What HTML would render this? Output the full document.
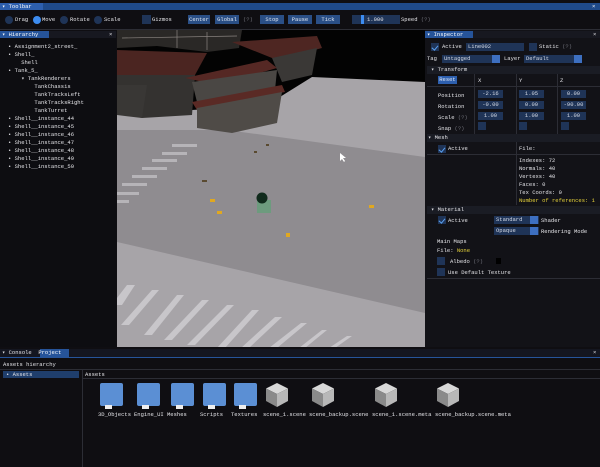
<!DOCTYPE html>
<html><head><meta charset="utf-8"><style>
*{margin:0;padding:0;box-sizing:border-box}
body{width:600px;height:467px;background:#0f0e12;position:relative;overflow:hidden;font-family:"Liberation Mono",monospace;font-size:5.5px;color:#e4e4e8;line-height:7px}
.a{position:absolute;white-space:nowrap}
.btn{position:absolute;background:#2a4f86;color:#dfe6f2;text-align:center;line-height:9px;height:9px}
.inp{position:absolute;background:#1f3457;color:#d6dbe6;text-align:center;line-height:8px;height:8px}
.cb{position:absolute;width:8px;height:8px;background:#1f3457}
.ck::after{content:"";position:absolute;left:2px;top:0.5px;width:2.5px;height:5px;border:solid #5aa0f0;border-width:0 1.3px 1.3px 0;transform:rotate(40deg)}
.rad{position:absolute;width:8px;height:8px;border-radius:50%;background:#1f3457}
.hdr{position:absolute;left:427px;width:173px;height:8px;background:#1a1c24}
.ln{position:absolute;background:#2c2d35}
.dim{color:#6e6f78}
.fold{position:absolute;top:383px;width:23px;height:23px;background:#5b8fd4;border-radius:2px}
.fold::after{content:"";position:absolute;left:5px;bottom:-3px;width:7px;height:4px;background:#eee}
.lb{position:absolute;top:411px;white-space:nowrap}
</style></head><body>
<div class="a" style="left:0;top:3px;width:600px;height:7px;background:#1f4a8a"></div>
<div class="a" style="left:0;top:3px;width:43px;height:7px;background:#2d5fae"></div>
<div class="a" style="left:2px;top:3px;color:#fff">▾ Toolbar</div>
<div class="a" style="left:592px;top:3px;color:#fff">×</div>
<div class="rad" style="left:5px;top:16px"></div><div class="a" style="left:15px;top:16px">Drag</div>
<div class="rad" style="left:33px;top:16px;background:#3d8cf0"></div><div class="a" style="left:42px;top:16px">Move</div>
<div class="rad" style="left:60px;top:16px"></div><div class="a" style="left:70px;top:16px">Rotate</div>
<div class="rad" style="left:94px;top:16px"></div><div class="a" style="left:104px;top:16px">Scale</div>
<div class="cb" style="left:142px;top:15px;width:9px;height:9px"></div><div class="a" style="left:152px;top:16px">Gizmos</div>
<div class="btn" style="left:188px;top:15px;width:22px">Center</div>
<div class="btn" style="left:215px;top:15px;width:24px">Global</div>
<div class="a dim" style="left:243px;top:16px">(?)</div>
<div class="btn" style="left:260px;top:15px;width:24px">Stop</div>
<div class="btn" style="left:288px;top:15px;width:24px">Pause</div>
<div class="btn" style="left:316px;top:15px;width:24px">Tick</div>
<div class="inp" style="left:352px;top:15px;width:48px;height:9px"></div>
<div class="a" style="left:361px;top:15px;width:3px;height:9px;background:#3d8cf0"></div>
<div class="a" style="left:367px;top:16px">1.000</div>
<div class="a" style="left:401px;top:16px">Speed <span class="dim">(?)</span></div>
<div class="ln" style="left:0;top:29px;width:600px;height:1px"></div>

<div class="a" style="left:0;top:31px;width:116px;height:7px;background:#171820"></div>
<div class="a" style="left:0;top:31px;width:49px;height:7px;background:#26549a"></div>
<div class="a" style="left:2px;top:31px;color:#fff">▾ Hierarchy</div>
<div class="a" style="left:109px;top:31px">×</div>
<div class="a" style="left:0;top:38px;width:116px;height:309px;background:#0d0d11"></div>
<div class="a" style="left:8px;top:43px;line-height:8px">• Assignment2_street_<br>• Shell_<br>&nbsp;&nbsp;&nbsp;&nbsp;Shell<br>• Tank_5_<br>&nbsp;&nbsp;&nbsp;&nbsp;▾ TankRenderers<br>&nbsp;&nbsp;&nbsp;&nbsp;&nbsp;&nbsp;&nbsp;&nbsp;TankChassis<br>&nbsp;&nbsp;&nbsp;&nbsp;&nbsp;&nbsp;&nbsp;&nbsp;TankTracksLeft<br>&nbsp;&nbsp;&nbsp;&nbsp;&nbsp;&nbsp;&nbsp;&nbsp;TankTracksRight<br>&nbsp;&nbsp;&nbsp;&nbsp;&nbsp;&nbsp;&nbsp;&nbsp;TankTurret<br>• Shell__instance_44<br>• Shell__instance_45<br>• Shell__instance_46<br>• Shell__instance_47<br>• Shell__instance_48<br>• Shell__instance_49<br>• Shell__instance_50</div>

<svg class="a" style="left:117px;top:30px" width="308" height="318" viewBox="0 0 308 318">
<rect width="308" height="318" fill="#030303"/>
<polygon points="0,85 150,75 195,47 308,52 308,318 0,318" fill="#a7a4a8"/>
<polygon points="0,100 110,100 308,127 308,283 0,212" fill="#8f8c90"/>
<polygon points="0,0 125,0 122,18 90,22 40,16 0,18" fill="#2a2826"/>
<g stroke="#8a8480" stroke-width="0.7"><line x1="5" y1="8" x2="120" y2="6"/><line x1="60" y1="0" x2="60" y2="18"/><line x1="90" y1="2" x2="90" y2="20"/></g>
<polygon points="0,20 90,23 78,45 0,45" fill="#4b2521"/>
<polygon points="0,45 78,45 75,85 25,88 0,82" fill="#343230"/>
<polygon points="115,12 200,6 205,18 160,30" fill="#4e2622"/>
<polygon points="155,28 200,18 195,45 165,52" fill="#3a3836"/>
<polygon points="68,48 150,30 160,38 100,55" fill="#552824"/>
<polygon points="75,52 160,40 158,60 80,72" fill="#4a4744"/>
<polygon points="75,72 165,55 168,62 80,80" fill="#5a2a25"/>
<polygon points="80,78 165,62 160,93 115,103 80,98" fill="#4f4b47"/>
<polygon points="0,55 30,55 25,88 0,85" fill="#393735"/>
<rect x="140" y="170" width="14" height="13" fill="#6d9b7e"/>
<circle cx="145" cy="168" r="5.5" fill="#102a1c"/>
<g fill="#e0a820"><rect x="93" y="169" width="5" height="3"/><rect x="100" y="181" width="5" height="3"/><rect x="252" y="175" width="5" height="3"/><rect x="169" y="203" width="4" height="4"/></g>
<g fill="#5a4a30"><rect x="85" y="150" width="5" height="2"/><rect x="137" y="121" width="3" height="2"/><rect x="149" y="114" width="3" height="2"/></g>
<g fill="#c8c6ca"><polygon points="10,255 18,255 5,275 0,275 0,268"/><polygon points="35,260 42,260 12,295 4,295"/><polygon points="60,265 67,265 35,305 27,305"/><polygon points="85,270 92,270 55,310 47,310"/><polygon points="110,275 117,275 78,315 70,315"/><polygon points="135,280 142,280 108,318 100,318"/><polygon points="158,287 165,287 132,318 124,318"/><polygon points="184,293 190,293 160,318 152,318"/><polygon points="205,300 210,300 188,318 182,318"/><polygon points="230,306 235,306 218,318 212,318"/></g>
<g fill="#b6b4b8"><rect x="0" y="170" width="12" height="3"/><rect x="0" y="162" width="22" height="3"/><rect x="5" y="153" width="25" height="3"/><rect x="15" y="145" width="25" height="3"/><rect x="25" y="137" width="25" height="3"/><rect x="35" y="129" width="25" height="3"/><rect x="45" y="122" width="25" height="3"/><rect x="55" y="114" width="25" height="3"/></g>
<polygon points="223,123 223,131 225,129 227,132 228,131 226,128 229,128" fill="#fff"/>
</svg>

<div class="a" style="left:425px;top:30px;width:175px;height:317px;background:#121217"></div>
<div class="a" style="left:425px;top:31px;width:175px;height:7px;background:#171820"></div>
<div class="a" style="left:425px;top:31px;width:48px;height:7px;background:#26549a"></div>
<div class="a" style="left:427px;top:31px;color:#fff">▾ Inspector</div>
<div class="a" style="left:593px;top:31px">×</div>
<div class="cb ck" style="left:431px;top:43px"></div><div class="a" style="left:442px;top:43px">Active</div>
<div class="inp" style="left:466px;top:43px;width:58px;text-align:left;padding-left:2px">Line002</div>
<div class="cb" style="left:529px;top:43px"></div><div class="a" style="left:539px;top:43px">Static <span class="dim">(?)</span></div>
<div class="a" style="left:427px;top:55px">Tag</div>
<div class="inp" style="left:442px;top:55px;width:58px;text-align:left;padding-left:2px">Untagged</div>
<div class="a" style="left:492px;top:55px;width:8px;height:8px;background:#3d6fc0"></div>
<div class="a" style="left:504px;top:55px">Layer</div>
<div class="inp" style="left:524px;top:55px;width:58px;text-align:left;padding-left:2px">Default</div>
<div class="a" style="left:574px;top:55px;width:8px;height:8px;background:#3d6fc0"></div>
<div class="hdr" style="top:66px"></div><div class="a" style="left:431px;top:66px">▾ Transform</div>
<div class="btn" style="left:438px;top:76px;width:19px;height:8px;line-height:8px;background:#2d5fae">Reset</div>
<div class="a" style="left:478px;top:77px">X</div><div class="a" style="left:519px;top:77px">Y</div><div class="a" style="left:560px;top:77px">Z</div>
<div class="ln" style="left:474px;top:74px;width:1px;height:60px"></div>
<div class="ln" style="left:516px;top:74px;width:1px;height:60px"></div>
<div class="ln" style="left:557px;top:74px;width:1px;height:60px"></div>
<div class="ln" style="left:427px;top:86px;width:173px;height:1px"></div>
<div class="a" style="left:438px;top:90px;line-height:11px">Position<br>Rotation<br>Scale <span class="dim">(?)</span><br>Snap <span class="dim">(?)</span></div>
<div class="inp" style="left:478px;top:90px;width:25px">-2.16</div><div class="inp" style="left:519px;top:90px;width:25px">1.05</div><div class="inp" style="left:561px;top:90px;width:25px">0.00</div>
<div class="inp" style="left:478px;top:101px;width:25px">-0.00</div><div class="inp" style="left:519px;top:101px;width:25px">0.00</div><div class="inp" style="left:561px;top:101px;width:25px">-90.00</div>
<div class="inp" style="left:478px;top:112px;width:25px">1.00</div><div class="inp" style="left:519px;top:112px;width:25px">1.00</div><div class="inp" style="left:561px;top:112px;width:25px">1.00</div>
<div class="cb" style="left:478px;top:122px"></div><div class="cb" style="left:519px;top:122px"></div><div class="cb" style="left:561px;top:122px"></div>
<div class="hdr" style="top:134px"></div><div class="a" style="left:428px;top:134px">▾ Mesh</div>
<div class="cb ck" style="left:438px;top:145px"></div><div class="a" style="left:448px;top:145px">Active</div>
<div class="ln" style="left:516px;top:142px;width:1px;height:63px"></div>
<div class="ln" style="left:427px;top:154px;width:173px;height:1px"></div>
<div class="a" style="left:519px;top:145px">File:</div>
<div class="a" style="left:519px;top:157px;line-height:8px">Indexes: 72<br>Normals: 40<br>Vertexs: 40<br>Faces: 0<br>Tex Coords: 0<br><span style="color:#e6d23a">Number of references: 1</span></div>
<div class="hdr" style="top:206px"></div><div class="a" style="left:431px;top:206px">▾ Material</div>
<div class="cb ck" style="left:438px;top:216px"></div><div class="a" style="left:448px;top:217px">Active</div>
<div class="inp" style="left:494px;top:216px;width:45px;text-align:left;padding-left:2px">Standard</div><div class="a" style="left:530px;top:216px;width:8px;height:8px;background:#3d6fc0"></div>
<div class="a" style="left:541px;top:217px">Shader</div>
<div class="inp" style="left:494px;top:227px;width:45px;text-align:left;padding-left:2px">Opaque</div><div class="a" style="left:530px;top:227px;width:8px;height:8px;background:#3d6fc0"></div>
<div class="a" style="left:541px;top:228px">Rendering Mode</div>
<div class="a" style="left:437px;top:238px">Main Maps</div>
<div class="a" style="left:437px;top:247px">File: <span style="color:#e6d23a">None</span></div>
<div class="cb" style="left:437px;top:257px"></div><div class="a" style="left:450px;top:258px">Albedo <span class="dim">(?)</span></div>
<div class="a" style="left:496px;top:258px;width:5px;height:6px;background:#000"></div>
<div class="cb" style="left:437px;top:268px"></div><div class="a" style="left:448px;top:269px">Use Default Texture</div>
<div class="ln" style="left:427px;top:278px;width:173px;height:1px"></div>

<div class="a" style="left:0;top:347px;width:600px;height:120px;background:#0f0e12"></div>
<div class="a" style="left:0;top:349px;width:600px;height:8px;background:#141620"></div>
<div class="a" style="left:0;top:357px;width:600px;height:1px;background:#26549a"></div>
<div class="a" style="left:40px;top:349px;width:29px;height:8px;background:#26549a"></div>
<div class="a" style="left:2px;top:349px">▾ Console&nbsp;&nbsp;<span style="color:#fff">Project</span></div>
<div class="a" style="left:593px;top:349px">×</div>
<div class="a" style="left:3px;top:361px">Assets hierarchy</div>
<div class="ln" style="left:0;top:369px;width:600px;height:1px"></div>
<div class="a" style="left:3px;top:371px;width:76px;height:7px;background:#1f3e6c"></div>
<div class="a" style="left:6px;top:371px">• Assets</div>
<div class="ln" style="left:82px;top:370px;width:1px;height:97px"></div>
<div class="a" style="left:85px;top:371px">Assets</div>
<div class="ln" style="left:83px;top:378px;width:517px;height:1px"></div>
<div class="fold" style="left:100px"></div>
<div class="fold" style="left:137px"></div>
<div class="fold" style="left:171px"></div>
<div class="fold" style="left:203px"></div>
<div class="fold" style="left:234px"></div>
<svg class="a" style="left:266px;top:383px" width="200" height="24">
<g id="c"><polygon points="11,0 22,5.5 11,11 0,5.5" fill="#d8d8d8"/><polygon points="0,5.5 11,11 11,24 0,18" fill="#8a8a8a"/><polygon points="22,5.5 11,11 11,24 22,18" fill="#b8b8b8"/></g>
<use href="#c" x="46"/><use href="#c" x="109"/><use href="#c" x="171"/>
</svg>
<div class="lb" style="left:98px">3D_Objects</div>
<div class="lb" style="left:134px">Engine_UI</div>
<div class="lb" style="left:167px">Meshes</div>
<div class="lb" style="left:200px">Scripts</div>
<div class="lb" style="left:231px">Textures</div>
<div class="lb" style="left:263px">scene_1.scene</div>
<div class="lb" style="left:309px">scene_backup.scene</div>
<div class="lb" style="left:372px">scene_1.scene.meta</div>
<div class="lb" style="left:435px">scene_backup.scene.meta</div>
</body></html>
